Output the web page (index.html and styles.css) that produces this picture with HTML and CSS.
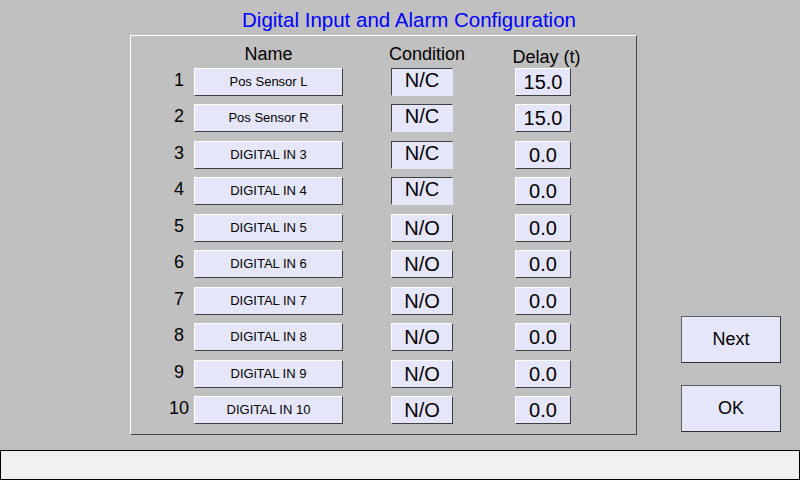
FILE: index.html
```html
<!DOCTYPE html>
<html lang="en">
<head>
  <meta charset="UTF-8">
  <title>Digital Input and Alarm Configuration</title>
  <link rel="stylesheet" href="styles.css">
</head>
<body>
  <h1 class="title">Digital Input and Alarm Configuration</h1>

  <div class="main">
    <div class="panel">
      <div class="head">
        <span></span>
        <span class="h-name">Name</span>
        <span class="h-cond">Condition</span>
        <span class="h-delay">Delay (t)</span>
      </div>

      <div class="rows">
        <span class="num">1</span><div class="field name">Pos Sensor L</div><div class="field cond nc">N/C</div><div class="field delay">15.0</div>
        <span class="num">2</span><div class="field name">Pos Sensor R</div><div class="field cond nc">N/C</div><div class="field delay">15.0</div>
        <span class="num">3</span><div class="field name">DIGITAL IN 3</div><div class="field cond nc">N/C</div><div class="field delay">0.0</div>
        <span class="num">4</span><div class="field name">DIGITAL IN 4</div><div class="field cond nc">N/C</div><div class="field delay">0.0</div>
        <span class="num">5</span><div class="field name">DIGITAL IN 5</div><div class="field cond">N/O</div><div class="field delay">0.0</div>
        <span class="num">6</span><div class="field name">DIGITAL IN 6</div><div class="field cond">N/O</div><div class="field delay">0.0</div>
        <span class="num">7</span><div class="field name">DIGITAL IN 7</div><div class="field cond">N/O</div><div class="field delay">0.0</div>
        <span class="num">8</span><div class="field name">DIGITAL IN 8</div><div class="field cond">N/O</div><div class="field delay">0.0</div>
        <span class="num">9</span><div class="field name">DIGiTAL IN 9</div><div class="field cond">N/O</div><div class="field delay">0.0</div>
        <span class="num">10</span><div class="field name">DIGITAL IN 10</div><div class="field cond">N/O</div><div class="field delay">0.0</div>
      </div>
    </div>

    <div class="side">
      <button class="btn">Next</button>
      <button class="btn">OK</button>
    </div>
  </div>

  <div class="status"></div>
</body>
</html>
```

FILE: styles.css
```css
body {
  margin: 0;
  width: 800px;
  height: 480px;
  overflow: hidden;
  background: #c0c0c0;
  font-family: "Liberation Sans", Arial, sans-serif;
  color: #000;
  display: flex;
  flex-direction: column;
}

.title {
  margin: 0;
  height: 35px;
  box-sizing: border-box;
  padding: 8px 0 0 18px;
  font-size: 20.5px;
  font-weight: normal;
  line-height: 24px;
  text-align: center;
  color: #0000ff;
}

.main {
  display: flex;
  height: 400px;
  padding-left: 130px;
}

.panel {
  width: 507px;
  height: 400px;
  box-sizing: border-box;
  border: 1px solid;
  border-color: #fff #444 #444 #fff;
}

.head, .rows {
  display: grid;
  grid-template-columns: 63px 149px 110px 118px;
}

/* column headers */
.head {
  height: 28px;
  box-sizing: border-box;
  padding-top: 8px;
  font-size: 18px;
  line-height: 20px;
}

.head span {
  display: flex;
  justify-content: center;
  white-space: nowrap;
}

.h-cond {
  justify-self: end;
  width: 62px;
  padding-left: 10px;
  box-sizing: border-box;
}

.h-delay {
  justify-self: end;
  width: 56px;
  padding: 3px 0 0 7px;
  box-sizing: border-box;
}

/* input rows */
.rows {
  margin-top: 4px;
  grid-auto-rows: 28px;
  row-gap: 8.44px;
}

.num {
  padding-left: 33px;
  text-align: center;
  font-size: 18px;
  line-height: 24px;
}

.field {
  box-sizing: border-box;
  height: 28px;
  background: #e6e6fa;
  border: 1px solid;
  border-color: #fff #404040 #404040 #fff;
  text-align: center;
  white-space: nowrap;
}

.name {
  font-size: 13px;
  line-height: 26px;
}

.cond, .delay {
  justify-self: end;
  font-size: 20px;
  line-height: 26px;
}

.cond {
  width: 62px;
}

.cond.nc {
  border-color: #404040 #e6e6fa #e6e6fa #404040;
  line-height: 23px;
}

.delay {
  width: 56px;
}

.side {
  display: flex;
  flex-direction: column;
  justify-content: flex-end;
  gap: 22px;
  margin-left: 44px;
  padding-bottom: 3px;
}

.btn {
  width: 100px;
  height: 47px;
  padding: 0;
  background: #e6e6fa;
  border: 1px solid;
  border-color: #606060 #303030 #303030 #606060;
  font-family: "Liberation Sans", Arial, sans-serif;
  font-size: 18px;
  color: #000;
}

.status {
  margin-top: 15px;
  height: 30px;
  box-sizing: border-box;
  background: #f0f0f0;
  border: 1px solid #000;
}
```
